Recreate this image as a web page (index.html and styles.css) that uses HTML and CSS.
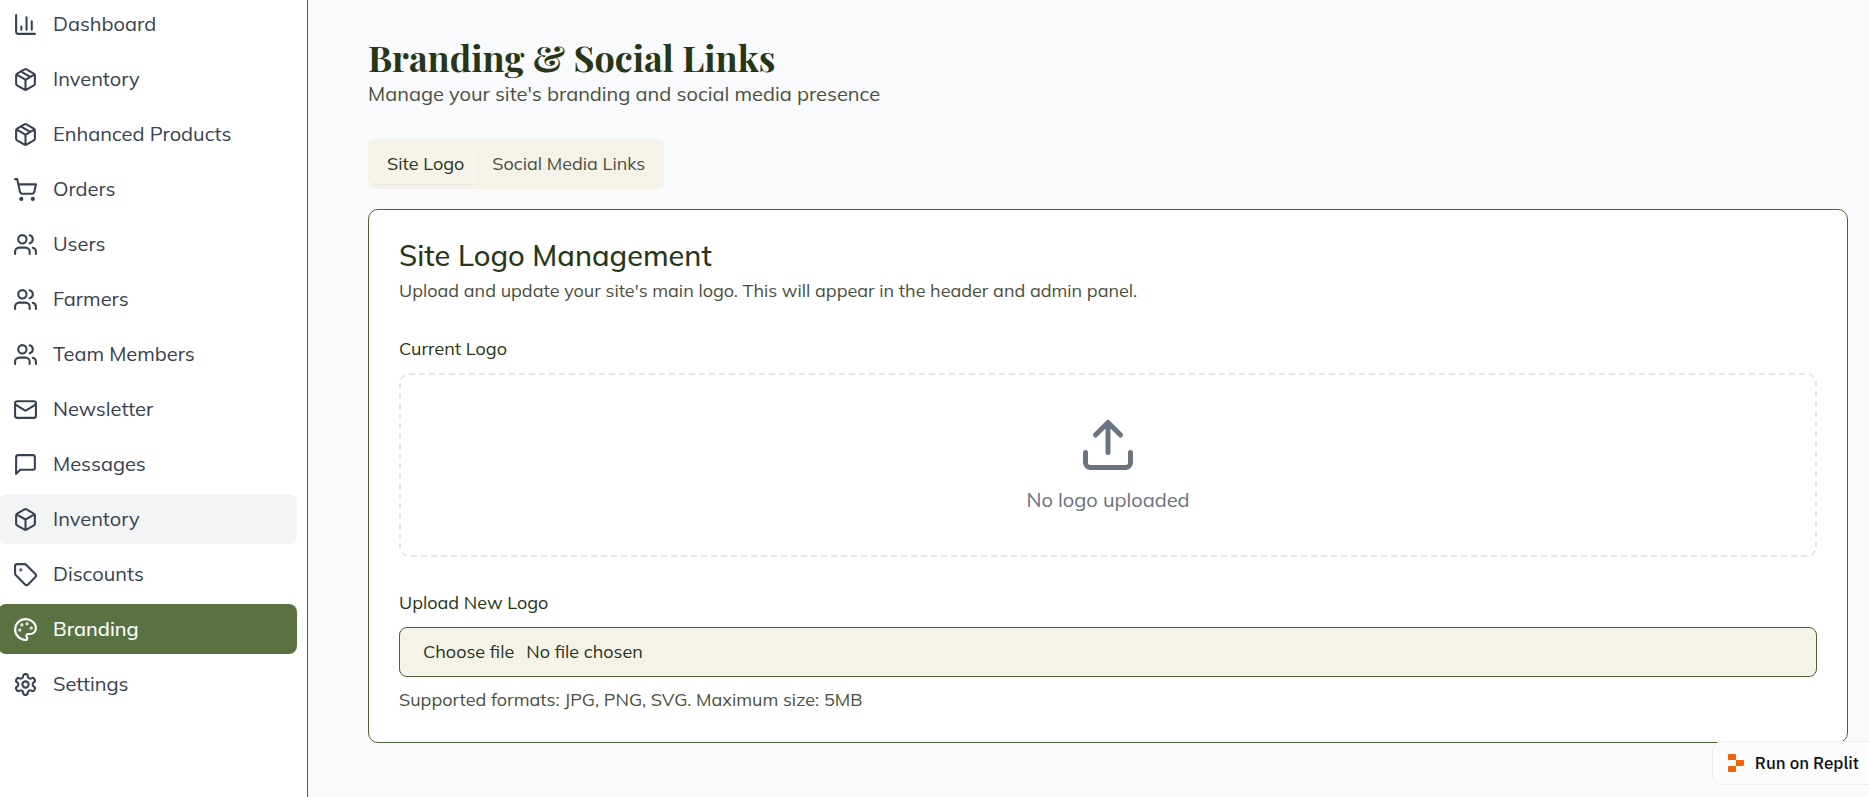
FILE: index.html
```html
<!DOCTYPE html>
<html lang="en">
<head>
<meta charset="utf-8">
<title>Branding &amp; Social Links</title>
<link rel="stylesheet" href="styles.css">
</head>
<body>
<div class="layout">
  <aside class="sidebar">
    <nav class="nav" aria-label="Admin">
      <a class="nav-item" href="#"><svg class="icon" viewBox="0 0 24 24"><path d="M3 3v16a2 2 0 0 0 2 2h16M18 17V9M13 17V5M8 17v-3"/></svg>Dashboard</a>
      <a class="nav-item" href="#"><svg class="icon" viewBox="0 0 24 24"><path d="M11 21.73a2 2 0 0 0 2 0l7-4A2 2 0 0 0 21 16V8a2 2 0 0 0-1-1.73l-7-4a2 2 0 0 0-2 0l-7 4A2 2 0 0 0 3 8v8a2 2 0 0 0 1 1.73zM12 22V12M3.3 7l7.703 4.734a2 2 0 0 0 1.994 0L20.7 7M7.5 4.27l9 5.15"/></svg>Inventory</a>
      <a class="nav-item" href="#"><svg class="icon" viewBox="0 0 24 24"><path d="M11 21.73a2 2 0 0 0 2 0l7-4A2 2 0 0 0 21 16V8a2 2 0 0 0-1-1.73l-7-4a2 2 0 0 0-2 0l-7 4A2 2 0 0 0 3 8v8a2 2 0 0 0 1 1.73zM12 22V12M3.3 7l7.703 4.734a2 2 0 0 0 1.994 0L20.7 7M7.5 4.27l9 5.15"/></svg>Enhanced Products</a>
      <a class="nav-item" href="#"><svg class="icon" viewBox="0 0 24 24"><circle cx="8" cy="21" r="1"/><circle cx="19" cy="21" r="1"/><path d="M2.05 2.05h2l2.66 12.42a2 2 0 0 0 2 1.58h9.78a2 2 0 0 0 1.95-1.57l1.65-7.43H5.12"/></svg>Orders</a>
      <a class="nav-item" href="#"><svg class="icon" viewBox="0 0 24 24"><path d="M16 21v-2a4 4 0 0 0-4-4H6a4 4 0 0 0-4 4v2"/><circle cx="9" cy="7" r="4"/><path d="M22 21v-2a4 4 0 0 0-3-3.87M16 3.13a4 4 0 0 1 0 7.75"/></svg>Users</a>
      <a class="nav-item" href="#"><svg class="icon" viewBox="0 0 24 24"><path d="M16 21v-2a4 4 0 0 0-4-4H6a4 4 0 0 0-4 4v2"/><circle cx="9" cy="7" r="4"/><path d="M22 21v-2a4 4 0 0 0-3-3.87M16 3.13a4 4 0 0 1 0 7.75"/></svg>Farmers</a>
      <a class="nav-item" href="#"><svg class="icon" viewBox="0 0 24 24"><path d="M16 21v-2a4 4 0 0 0-4-4H6a4 4 0 0 0-4 4v2"/><circle cx="9" cy="7" r="4"/><path d="M22 21v-2a4 4 0 0 0-3-3.87M16 3.13a4 4 0 0 1 0 7.75"/></svg>Team Members</a>
      <a class="nav-item" href="#"><svg class="icon" viewBox="0 0 24 24"><rect x="2" y="4" width="20" height="16" rx="2"/><path d="m22 7-8.97 5.7a1.94 1.94 0 0 1-2.06 0L2 7"/></svg>Newsletter</a>
      <a class="nav-item" href="#"><svg class="icon" viewBox="0 0 24 24"><path d="M21 15a2 2 0 0 1-2 2H7l-4 4V5a2 2 0 0 1 2-2h14a2 2 0 0 1 2 2z"/></svg>Messages</a>
      <a class="nav-item hovered" href="#"><svg class="icon" viewBox="0 0 24 24"><path d="M21 8a2 2 0 0 0-1-1.73l-7-4a2 2 0 0 0-2 0l-7 4A2 2 0 0 0 3 8v8a2 2 0 0 0 1 1.73l7 4a2 2 0 0 0 2 0l7-4A2 2 0 0 0 21 16ZM3.3 7l8.7 5 8.7-5M12 22V12"/></svg>Inventory</a>
      <a class="nav-item" href="#"><svg class="icon" viewBox="0 0 24 24"><path d="M12.586 2.586A2 2 0 0 0 11.172 2H4a2 2 0 0 0-2 2v7.172a2 2 0 0 0 .586 1.414l8.704 8.704a2.426 2.426 0 0 0 3.42 0l6.58-6.58a2.426 2.426 0 0 0 0-3.42z"/><circle class="dot" cx="7.5" cy="7.5" r=".5"/></svg>Discounts</a>
      <a class="nav-item active" href="#" aria-current="page"><svg class="icon" viewBox="0 0 24 24"><circle class="dot" cx="13.5" cy="6.5" r=".5"/><circle class="dot" cx="17.5" cy="10.5" r=".5"/><circle class="dot" cx="8.5" cy="7.5" r=".5"/><circle class="dot" cx="6.5" cy="12.5" r=".5"/><path d="M12 2C6.5 2 2 6.5 2 12s4.5 10 10 10c.926 0 1.648-.746 1.648-1.688 0-.437-.18-.835-.437-1.125-.29-.289-.438-.652-.438-1.125a1.64 1.64 0 0 1 1.668-1.668h1.996c3.051 0 5.555-2.503 5.555-5.554C21.965 6.012 17.461 2 12 2z"/></svg>Branding</a>
      <a class="nav-item" href="#"><svg class="icon" viewBox="0 0 24 24"><path d="M12.22 2h-.44a2 2 0 0 0-2 2v.18a2 2 0 0 1-1 1.73l-.43.25a2 2 0 0 1-2 0l-.15-.08a2 2 0 0 0-2.73.73l-.22.38a2 2 0 0 0 .73 2.73l.15.1a2 2 0 0 1 1 1.72v.51a2 2 0 0 1-1 1.74l-.15.09a2 2 0 0 0-.73 2.73l.22.38a2 2 0 0 0 2.73.73l.15-.08a2 2 0 0 1 2 0l.43.25a2 2 0 0 1 1 1.73V20a2 2 0 0 0 2 2h.44a2 2 0 0 0 2-2v-.18a2 2 0 0 1 1-1.73l.43-.25a2 2 0 0 1 2 0l.15.08a2 2 0 0 0 2.73-.73l.22-.39a2 2 0 0 0-.73-2.73l-.15-.08a2 2 0 0 1-1-1.74v-.5a2 2 0 0 1 1-1.74l.15-.09a2 2 0 0 0 .73-2.73l-.22-.38a2 2 0 0 0-2.73-.73l-.15.08a2 2 0 0 1-2 0l-.43-.25a2 2 0 0 1-1-1.73V4a2 2 0 0 0-2-2z"/><circle cx="12" cy="12" r="3"/></svg>Settings</a>
    </nav>
  </aside>
  <main class="main">
    <header class="page-head">
      <h1 class="page-title">Branding &amp; Social Links</h1>
      <p class="page-subtitle">Manage your site's branding and social media presence</p>
    </header>
    <div class="tabs" role="tablist">
      <button class="tab selected" type="button" role="tab" aria-selected="true">Site Logo</button>
      <button class="tab" type="button" role="tab" aria-selected="false">Social Media Links</button>
    </div>
    <section class="card">
      <h2 class="card-title">Site Logo Management</h2>
      <p class="card-text">Upload and update your site's main logo. This will appear in the header and admin panel.</p>
      <h3 class="label current-label">Current Logo</h3>
      <div class="dropzone">
        <svg class="upload-icon" viewBox="0 0 24 24"><path d="M21 15v4a2 2 0 0 1-2 2H5a2 2 0 0 1-2-2v-4M17 8l-5-5-5 5M12 3v12"/></svg>
        <p class="empty-text">No logo uploaded</p>
      </div>
      <label class="label upload-label" for="logo-file">Upload New Logo</label>
      <label class="file-field">
        <input class="file-input" id="logo-file" type="file">
        <span>Choose file</span>
        <span>No file chosen</span>
      </label>
      <p class="hint">Supported formats: JPG, PNG, SVG. Maximum size: 5MB</p>
    </section>
  </main>
</div>
<a class="replit-badge" href="#"><svg class="replit-logo" viewBox="0 0 16 18"><path d="M0 1a1 1 0 0 1 1-1h6a1 1 0 0 1 1 1v5H1a1 1 0 0 1-1-1zM8 6h7a1 1 0 0 1 1 1v4a1 1 0 0 1-1 1H8zM0 13a1 1 0 0 1 1-1h7v5a1 1 0 0 1-1 1H1a1 1 0 0 1-1-1z"/></svg>Run on Replit</a>
</body>
</html>
```
FILE: styles.css
```css
* {
  box-sizing: border-box;
}

body {
  margin: 0;
  background: #f9fafc;
  color: #283618;
  font-family: Mulish, Muli, "Open Sans", sans-serif;
  font-size: 20px;
  line-height: 30px;
  overflow: hidden;
}

h1, h2, h3, p {
  margin: 0;
}

.layout {
  display: flex;
  min-height: 100vh;
}

.sidebar {
  flex: 0 0 308px;
  padding-right: 10px;
  background: #fff;
  border-right: 1px solid #4e6138;
}

.nav {
  display: flex;
  flex-direction: column;
  gap: 5px;
  margin: -1px 0 0 -2px;
}

.nav-item {
  display: flex;
  align-items: center;
  gap: 15px;
  height: 50px;
  padding: 0 15px;
  border-radius: 8px;
  color: #374151;
  text-decoration: none;
}

.nav-item.hovered {
  background: #f3f4f6;
}

.nav-item.active {
  background: #5a7242;
  color: #fff;
  font-weight: 500;
}

.icon {
  width: 25px;
  height: 25px;
}

.icon,
.upload-icon {
  fill: none;
  stroke: currentColor;
  stroke-width: 2;
  stroke-linecap: round;
  stroke-linejoin: round;
}

.dot {
  fill: currentColor;
}

.main {
  flex: 1;
  padding: 35px 21px 40px 60px;
}

.page-title {
  font-family: "Playfair Display", "Liberation Serif", serif;
  font-size: 36px;
  line-height: 45px;
  font-weight: 700;
}

.page-subtitle {
  line-height: 28px;
  color: #4a5040;
}

.tabs {
  display: inline-flex;
  height: 50px;
  margin-top: 31px;
  padding: 5px;
  border-radius: 8px;
  background: #f5f2ea;
}

.tab {
  padding: 0 14px;
  border: 0;
  border-radius: 6px;
  background: none;
  color: #4a5040;
  font: inherit;
  font-size: 18px;
}

.tab.selected {
  background: #f6f3ec;
  color: #283618;
  box-shadow: 0 1px 2px rgb(0 0 0 / 6%);
}

.card {
  margin-top: 20px;
  padding: 30px;
  border: 1px solid #4e6138;
  border-radius: 10px;
  background: #fff;
}

.card-title {
  font-size: 29px;
  line-height: 30px;
  font-weight: 500;
}

.card-text,
.hint {
  font-size: 18px;
  line-height: 25px;
  color: #4a5040;
}

.card-text {
  margin-top: 8px;
}

.label {
  display: block;
  font-size: 18px;
  line-height: 20px;
  font-weight: 400;
}

.current-label {
  margin-top: 36px;
}

.dropzone {
  display: flex;
  flex-direction: column;
  align-items: center;
  margin-top: 14px;
  padding: 40px;
  border: 2px dashed #e5e7eb;
  border-radius: 10px;
  color: #6b7280;
}

.upload-icon {
  width: 60px;
  height: 60px;
  margin-bottom: 10px;
}

.upload-label {
  margin-top: 36px;
}

.file-field {
  position: relative;
  display: flex;
  align-items: center;
  gap: 12px;
  height: 50px;
  margin-top: 14px;
  padding: 0 23px;
  border: 1px solid #4e6138;
  border-radius: 8px;
  background: #f5f2ea;
  font-size: 18px;
}

.file-input {
  position: absolute;
  inset: 0;
  width: 100%;
  opacity: 0;
}

.hint {
  margin-top: 10px;
}

.replit-badge {
  position: fixed;
  right: -10px;
  bottom: 12px;
  display: flex;
  align-items: center;
  gap: 11px;
  height: 44px;
  padding: 0 19px 0 15px;
  border: 1px solid #edeef0;
  border-radius: 10px;
  background: #fcfcfc;
  color: #0e1116;
  font-family: "IBM Plex Sans", "Noto Sans", sans-serif;
  font-size: 17px;
  font-weight: 500;
  text-decoration: none;
}

.replit-logo {
  width: 16px;
  height: 18px;
  fill: #f26207;
}
```
